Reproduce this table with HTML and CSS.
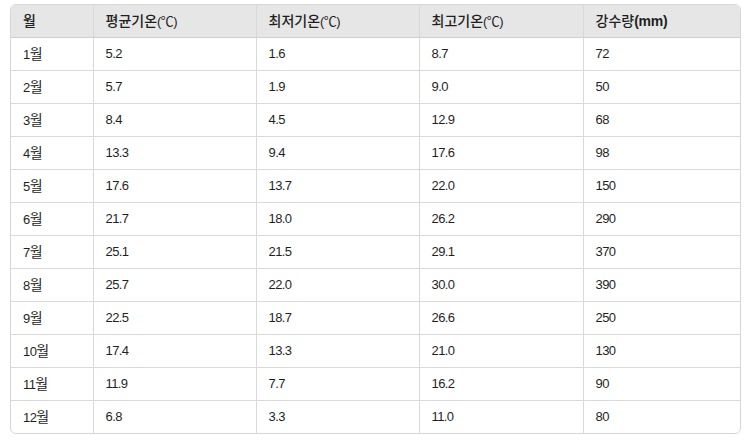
FILE: index.html
```html
<!DOCTYPE html>
<html lang="ko">
<head>
<meta charset="utf-8">
<link rel="stylesheet" href="styles.css">
</head>
<body>
<div class="wrap">
<table class="tbl">
<colgroup><col class="c1"><col class="c2"><col class="c3"><col class="c4"><col class="c5"></colgroup>
<thead>
<tr><th><span class="ko">월</span></th><th><span class="ko">평균기온</span>(℃)</th><th><span class="ko">최저기온</span>(℃)</th><th><span class="ko">최고기온</span>(℃)</th><th><span class="ko">강수량</span><b>(mm)</b></th></tr>
</thead>
<tbody>
<tr><td>1<span class="ko">월</span></td><td>5.2</td><td>1.6</td><td>8.7</td><td>72</td></tr>
<tr><td>2<span class="ko">월</span></td><td>5.7</td><td>1.9</td><td>9.0</td><td>50</td></tr>
<tr><td>3<span class="ko">월</span></td><td>8.4</td><td>4.5</td><td>12.9</td><td>68</td></tr>
<tr><td>4<span class="ko">월</span></td><td>13.3</td><td>9.4</td><td>17.6</td><td>98</td></tr>
<tr><td>5<span class="ko">월</span></td><td>17.6</td><td>13.7</td><td>22.0</td><td>150</td></tr>
<tr><td>6<span class="ko">월</span></td><td>21.7</td><td>18.0</td><td>26.2</td><td>290</td></tr>
<tr><td>7<span class="ko">월</span></td><td>25.1</td><td>21.5</td><td>29.1</td><td>370</td></tr>
<tr><td>8<span class="ko">월</span></td><td>25.7</td><td>22.0</td><td>30.0</td><td>390</td></tr>
<tr><td>9<span class="ko">월</span></td><td>22.5</td><td>18.7</td><td>26.6</td><td>250</td></tr>
<tr><td>10<span class="ko">월</span></td><td>17.4</td><td>13.3</td><td>21.0</td><td>130</td></tr>
<tr><td>11<span class="ko">월</span></td><td>11.9</td><td>7.7</td><td>16.2</td><td>90</td></tr>
<tr><td>12<span class="ko">월</span></td><td>6.8</td><td>3.3</td><td>11.0</td><td>80</td></tr>
</tbody>
</table>
</div>
</body>
</html>
```
FILE: styles.css
```css
html, body { margin: 0; padding: 0; background: #fff; }
body { padding: 4px 0 0 10px; }
.wrap {
  width: 729px;
  border: 1px solid #d6d6d6;
  border-radius: 6px;
  overflow: hidden;
}
.tbl {
  width: 100%;
  border-collapse: collapse;
  table-layout: fixed;
  font-family: "Liberation Sans", "Noto Sans CJK KR", sans-serif;
  font-size: 13px;
  color: #1f1f1f;
  letter-spacing: -0.6px;
}
.ko {
  font-family: "Noto Sans CJK KR", sans-serif;
  font-size: 14px;
  letter-spacing: 0;
}
.c1 { width: 82px; }
.c2 { width: 163px; }
.c3 { width: 163px; }
.c4 { width: 164px; }
.c5 { width: auto; }
.tbl th, .tbl td {
  height: 32px;
  padding: 0 0 0 12px;
  text-align: left;
  vertical-align: middle;
  border-right: 1px solid #d9d9d9;
  border-bottom: 1px solid #d9d9d9;
  white-space: nowrap;
  line-height: 18px;
}
.tbl th:last-child, .tbl td:last-child { border-right: none; }
.tbl tbody tr:last-child td { border-bottom: none; }
.tbl th {
  background: #e6e6e6;
  font-weight: 400;
  border-bottom-color: #cfcfcf;
}
.tbl th .ko { font-weight: 500; }
.tbl th b { font-weight: 700; font-size: 14px; letter-spacing: -0.2px; }
```
